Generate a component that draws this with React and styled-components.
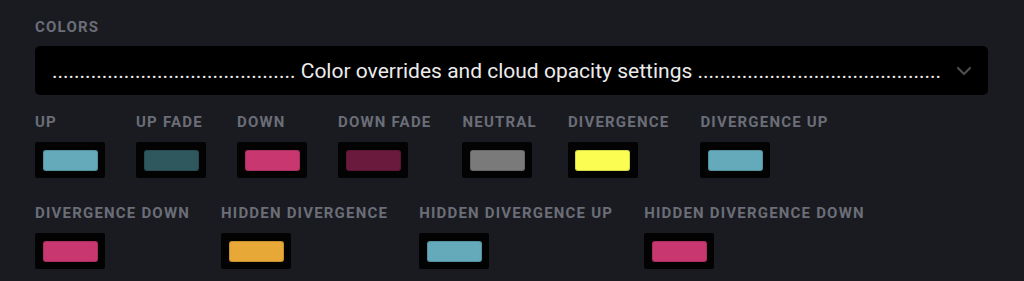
import styled, { createGlobalStyle } from 'styled-components';

const GlobalStyle = createGlobalStyle`
  html, body {
    margin: 0;
    padding: 0;
    background: #1a1b20;
    font-family: Roboto, "Liberation Sans", sans-serif;
  }
`;

const Page = styled.div`
  padding: 17px 36px 0 35px;
`;

const SectionLabel = styled.div`
  font-size: 15px;
  line-height: 20px;
  font-weight: 700;
  letter-spacing: 1.2px;
  color: #6b6e78;
  text-transform: uppercase;
  margin-bottom: 9px;
`;

const Select = styled.div`
  position: relative;
  height: 49px;
  border-radius: 5px;
  background: #000;
  display: flex;
  align-items: center;
  justify-content: center;
  padding: 0 50px 0 20px;
  color: #ececec;
  font-size: 21px;
  white-space: nowrap;
  overflow: hidden;
`;

const Chevron = styled.svg`
  position: absolute;
  right: 16px;
  top: 50%;
  transform: translateY(-50%);
`;

const SwatchGrid = styled.div`
  display: flex;
  flex-wrap: wrap;
  column-gap: 31px;
  row-gap: 25px;
  margin-top: 17px;
`;

const Item = styled.div`
  display: flex;
  flex-direction: column;
  gap: 10px;
`;

const ItemLabel = styled(SectionLabel)`
  margin-bottom: 0;
`;

const Frame = styled.div`
  width: 70px;
  height: 36px;
  background: #030303;
  border-radius: 2px;
  display: flex;
  align-items: center;
  justify-content: center;
`;

const Chip = styled.div`
  width: 55px;
  height: 21px;
  border-radius: 3px;
  background: ${(p) => p.$color};
  box-shadow: inset 0 0 0 1px rgba(0, 0, 0, 0.15);
`;

const colors = [
  ['Up', '#64aabb'],
  ['Up fade', '#2e575e'],
  ['Down', '#c83770'],
  ['Down fade', '#6a1a3c'],
  ['Neutral', '#7a7a7a'],
  ['Divergence', '#fbfd52'],
  ['Divergence up', '#64aabb'],
  ['Divergence down', '#c83770'],
  ['Hidden divergence', '#e7a838'],
  ['Hidden divergence up', '#64aabb'],
  ['Hidden divergence down', '#c83770'],
];

const dots = '.'.repeat(44);

export default function App() {
  return (
    <>
      <GlobalStyle />
      <Page>
        <SectionLabel>Colors</SectionLabel>
        <Select>
          {dots} Color overrides and cloud opacity settings {dots}
          <Chevron width="16" height="10" viewBox="0 0 16 10" fill="none">
            <path d="M2 2l6 6 6-6" stroke="#4d4d4d" strokeWidth="2.2" strokeLinecap="round" strokeLinejoin="round" />
          </Chevron>
        </Select>
        <SwatchGrid>
          {colors.map(([name, c]) => (
            <Item key={name}>
              <ItemLabel>{name}</ItemLabel>
              <Frame>
                <Chip $color={c} />
              </Frame>
            </Item>
          ))}
        </SwatchGrid>
      </Page>
    </>
  );
}
